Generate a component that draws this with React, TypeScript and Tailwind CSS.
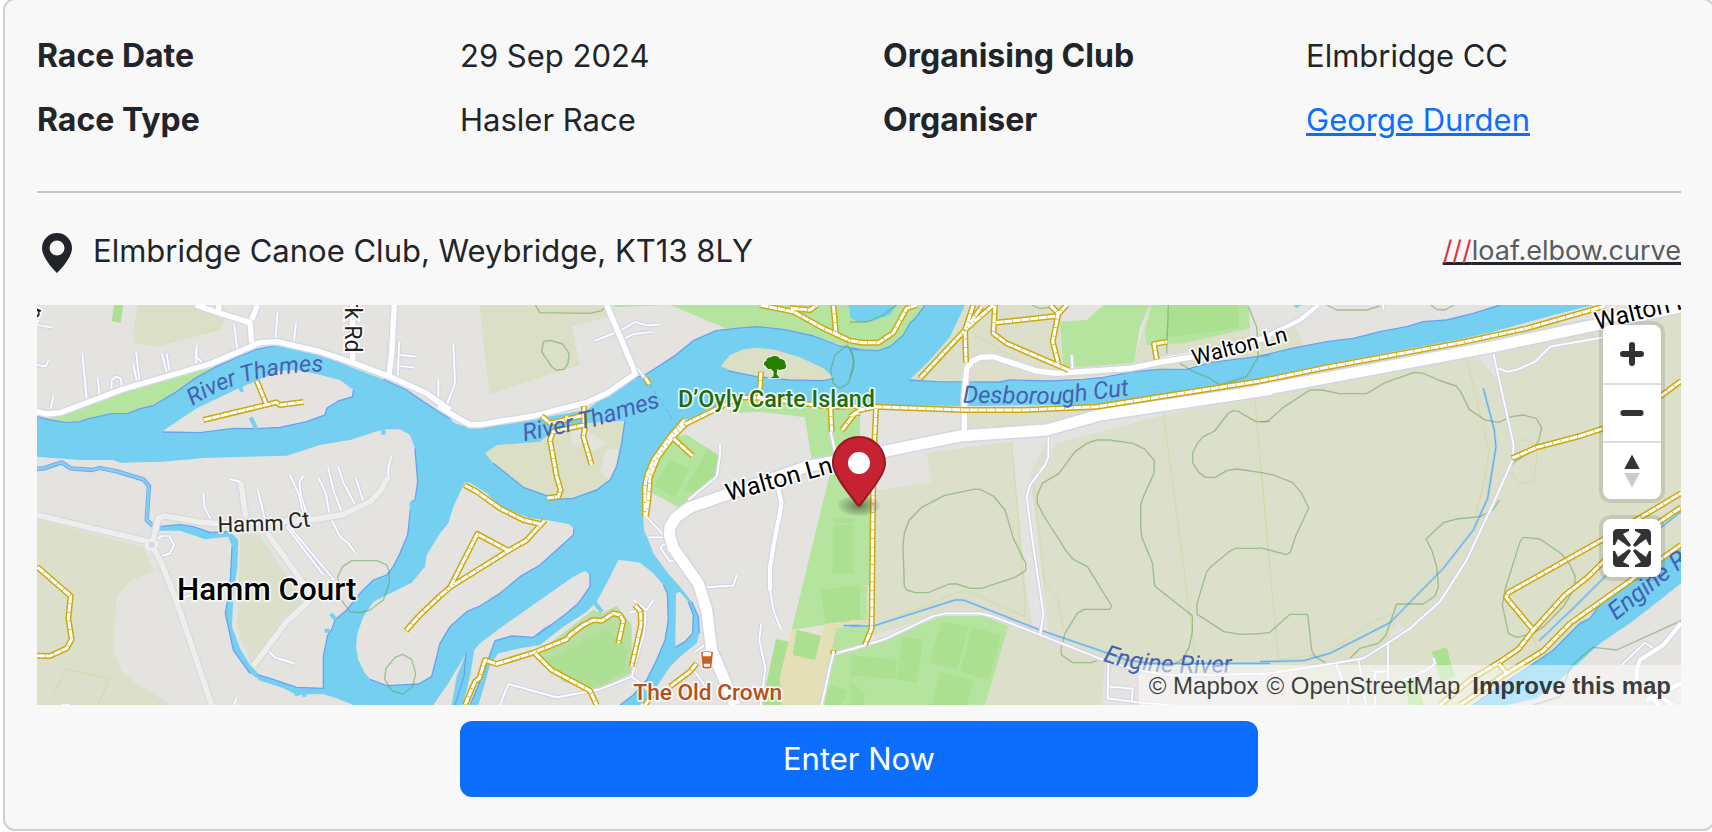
import React from "react";

type Shape = [number, string];

// The map is drawn in four sheets laid side by side.
const SHEET = [0, 1230, 2460, 3690];

function Layer({ shapes, className, width, dash }: { shapes: Shape[]; className: string; width?: number; dash?: string }) {
  return (
    <g className={className} strokeWidth={width} strokeDasharray={dash} strokeLinejoin="round">
      {shapes.map(([s, d], i) => (
        <path key={i} d={d} transform={`translate(${SHEET[s]} 0)`} />
      ))}
    </g>
  );
}

const farmland: Shape[] = [
  [0, "M21 657L340 742L372 812L300 842L260 888L250 1050L278 1122L420 1215H21Z"],
  [0, "M632 700L690 705L825 910L772 960L665 1098L620 980Z"],
  [2, "M80 572L242 547L230 458L480 425L600 435L940 345L1260 280V1215H405L470 975L390 945L270 945L70 1005Z"],
  [2, "M345 247L178 240L345 15H640L630 120L640 205L850 190L900 15H960L1150 15L1230 60L1240 170L900 213L560 245Z"],
  [2, "M345 322L740 322L1260 238V262L830 335L590 378L345 388Z"],
  [3, "M0 292L560 175L1010 80L1263 45V1215H0Z"],
  [3, "M0 100L105 75L130 138L0 162Z"],
  [3, "M730 95L1263 15V60L1000 90L0 250V238Z"],
];

const meadow: Shape[] = [
  [0, "M323 15L310 90L312 128L378 140L572 90L583 60L497 15Z"],
  [1, "M118 15L148 282L420 195L395 80L508 50L500 15Z"],
];

const urban: Shape[] = [
  [2, "M20 335L340 345V400L80 445V330Z"],
  [2, "M485 420L590 425L540 520L595 990H550L530 880Z"],
  [2, "M590 410L625 405L600 480Z"],
  [2, "M765 1090L900 1130L1260 1120V1215H755Z"],
  [3, "M0 1120L110 1105L105 1215H0Z"],
  [3, "M655 168L700 160L710 240Z"],
  [3, "M385 1010L415 970L440 990Z"],
  [3, "M745 1215L830 1190L930 1105L1030 1025L1263 848V1215Z"],
  [2, "M1195 15H1260V110L1200 110Z"],
  [3, "M0 15H720L500 60L130 135L105 70L0 110Z"],
];

const park: Shape[] = [
  [0, "M21 350L90 345L300 265L540 195L580 195L560 215L370 320L300 342L180 358L110 370Z"],
  [1, "M525 15H960L1260 15V150L1120 112L950 83L860 86L690 15L520 22Z"],
  [2, "M0 15H240L200 60L170 120L90 155L0 150Z"],
  [2, "M630 65L710 60L760 15H900L870 80L852 188L640 205Z"],
  [2, "M940 15H1195L1200 85L1000 130L890 135L885 90L905 15Z"],
  [1, "M700 410L740 405L835 465L828 535L745 600L720 625L630 575L640 510Z"],
  [1, "M865 340L900 300L1260 320V400L1250 1215H1130L1182 970L1055 990L1180 480L1115 480L1095 352L960 335Z"],
  [2, "M0 340L25 335L20 430L75 450L68 970L40 1035H0Z"],
  [2, "M0 1050L130 1010L270 948L400 948L475 978L405 1215H0Z"],
];

const islandPark: Shape[] = [
  [1, "M290 1060L460 930L485 940L530 918L575 975V1120L470 1170L370 1145L320 1090Z"],
];

const islandPitch: Shape[] = [
  [1, "M320 1080L500 985L560 1040L555 1110L470 1165L380 1145Z"],
];

const pitch: Shape[] = [
  [0, "M252 15H280L272 68L246 64Z"],
  [2, "M960 15H1165L1167 85L945 112Z"],
  [1, "M690 478L748 508L705 592L642 558Z"],
  [1, "M805 445L835 470L828 530L760 580L732 570Z"],
  [1, "M1178 678L1242 672V820H1178Z"],
  [1, "M1143 870L1260 855V960L1155 970Z"],
  [1, "M1180 655H1240V668H1180Z"],
  [1, "M1008 1018L1050 1025L1020 1130L1030 1215H965Z"],
  [1, "M1170 1155L1222 1170L1205 1215H1150Z"],
  [2, "M155 1010L218 1018L202 1150L140 1138Z"],
  [2, "M275 965L357 980L322 1108L237 1090Z"],
  [2, "M365 980L453 1005L417 1140L330 1115Z"],
  [2, "M270 1115L372 1142L350 1215H245Z"],
  [2, "M5 1065L142 1080L135 1138L0 1125Z"],
  [2, "M0 1145L45 1180L38 1215H0Z"],
  [3, "M515 1055L560 1042L572 1085L530 1095Z"],
  [3, "M525 1095L572 1085L585 1130L545 1145Z"],
  [3, "M430 1145L470 1130L490 1215H448Z"],
];

const sand: Shape[] = [
  [1, "M1055 985L1145 1005L1155 972L1260 960V978L1190 985L1165 1090L1140 1215H1025L1020 1130Z"],
  [2, "M35 858L50 855V960H0V978H65V855Z"],
];

const courts: Shape[] = [[1, "M1070 990L1143 1008L1125 1080L1058 1065Z"]];

const water: Shape[] = [
  [0, "M21 350L60 360L110 368L150 365L180 355L245 341L295 340L330 326L368 318L440 275L500 232L560 200L620 172L680 148L740 136L870 163L960 200L1050 235L1130 270L1180 305L1265 358V1215H970L920 1195L880 1183L840 1183L800 1185L760 1165L685 1140L690 1126L720 1135L800 1162L880 1165V1070L893 1005L905 990L915 960L950 930L990 880L1030 840L1070 825L1090 800L1110 760L1133 705L1143 635L1145 605L1155 600L1163 545L1155 445L1140 405L1110 388L1060 388L960 420L870 435L770 467L650 470L520 474L400 485L270 488L250 480L150 480L21 470Z"],
  [1, "M-5 340L50 372L90 383L250 362L440 330L480 300L530 266L590 232L620 222L700 170L760 122L828 92L880 86L950 80L1030 88L1120 108L1200 138L1265 148V318L1100 308L950 300L905 290L865 310L805 328L750 358L735 358L690 400L660 440L630 490L610 555L608 620L612 690L625 720L640 760L680 815L720 860L755 905L775 950L778 1000L770 1030L720 1070L690 1100L650 1160L600 1215H-5Z"],
  [2, "M0 148L85 152L120 140L160 105L180 70L200 50L225 15H345L300 110L240 180L178 240L260 245L345 247L450 246L480 240L600 243L700 238L760 232L850 215L930 208L1010 208L1080 188L1180 175L1265 165V236L1100 260L900 290L740 314L400 318L0 315Z"],
  [3, "M0 168L95 145L200 125L280 115L360 95L440 80L490 65L560 60L640 40L720 15H1000L870 48L700 95L600 118L400 155L200 195L0 236Z"],
  [3, "M1263 750L1200 780L1150 825L1080 860L1030 900L990 955L960 970L880 1050L800 1105L740 1145L640 1215H745L830 1195L900 1140L950 1095L1020 1030L1110 970L1200 900L1263 850Z"],
  [0, "M385 680L450 674L490 680L540 697L600 695L625 720L622 800L610 890L606 980L630 1045L660 1095L690 1126L690 1140L660 1120L610 1050L586 940L600 860L606 740L595 710L525 718L450 692L385 692Z"],
  [1, "M1225 15H1260V60L1235 55Z"],
  [2, "M0 15H140L120 45L60 65L20 66L0 50Z"],
  [3, "M100 15H125L108 25Z"],
];

const islands: Shape[] = [
  [0, "M395 395L500 325L620 268L750 212L800 210L860 222L930 240L970 270L968 290L925 303L890 325L885 345L830 365L750 382L680 386L610 385L510 398Z"],
  [1, "M75 545L40 620L25 670L0 700L-40 765L-45 800L-85 848L-140 875L-200 905L-230 950L-248 1000L-252 1040L-245 1080L-225 1120L-210 1138L-160 1157L-65 1152L-25 1130L-15 1090L0 1030L30 980L80 935L120 918L180 880L240 830L300 795L350 750L400 705L402 685L385 672L320 660L270 655L180 620L140 580L90 548Z"],
  [1, "M103 1050L120 1030L200 970L300 900L400 830L435 812L450 825V860L415 910L380 940L340 970L310 985L280 1012L215 1008L165 1022L155 1050L130 1120L90 1215H68L90 1130Z"],
  [1, "M78 1060L50 1130L35 1215H-20L25 1150Z"],
  [1, "M115 1215L135 1150L150 1095L175 1060L240 1045L300 1035L370 980L440 935L470 905L500 850L535 780L560 782L600 788L640 820L670 855L682 880L685 960L675 1020L650 1080L620 1140L580 1185L540 1215Z"],
  [1, "M708 880L720 875L745 905L760 945L758 1000L735 1025L706 1042Z"],
];

const meadowIslands: Shape[] = [
  [1, "M135 460L170 435L300 425L330 400L390 385L430 370L555 362L545 430L530 500L510 540L470 570L400 595L350 598L300 580L250 562L210 530L160 490Z"],
  [1, "M843 198L870 165L910 148L950 143L1000 148L1080 172L1150 205L1183 235L1150 242L1050 240L950 230L880 215Z"],
];

const greyPatches: Shape[] = [
  [1, "M390 395L430 385L450 400L500 430L460 455L435 430L400 440Z"],
  [1, "M498 448L535 448L525 505L510 540L480 515Z"],
];

const banks: Shape[] = [
  [0, "M21 350L60 360L110 368L150 365L180 355L245 341L295 340L330 326L368 318L440 275L500 232L560 200L620 172L680 148L740 136"],
  [0, "M1060 238L1130 270L1180 305L1260 357"],
  [0, "M395 396L510 398L610 385L680 386L750 382L830 365L885 345L890 325L925 303L968 290L970 270"],
  [0, "M1155 445L1163 545L1155 600L1145 605L1140 640L1133 705L1110 760L1090 800L1070 825L1030 840L990 880L950 930L915 960L905 990L893 1005L880 1070V1165L800 1162L720 1135L685 1125"],
  [0, "M606 740L600 860L586 940L610 1050L660 1120M385 680L450 674L490 680L540 697L600 695"],
  [1, "M480 300L530 266L590 232L620 222L700 170L760 122L828 92L880 86L950 80L1030 88L1120 108L1200 138L1260 148"],
  [1, "M-210 1138L-160 1157L-65 1152L-25 1130L-15 1090L0 1030L30 980L80 935L120 918L180 880L240 830L300 795L350 750L400 705L402 685"],
  [1, "M450 822V860L415 910L380 940L340 970L280 1012L215 1008L165 1022L155 1050L130 1120L90 1215M78 1060L72 1130L45 1215"],
  [1, "M670 855L682 880L685 960L675 1020L650 1080L620 1140L580 1185L540 1215M745 905L760 945L758 1000L735 1025L706 1042M755 905L775 950L778 1000"],
  [1, "M555 362L545 430L530 500L510 540L470 570L400 595L350 598L300 580L250 562L160 490"],
  [1, "M865 213L950 230L1050 240L1150 242L1183 235"],
  [2, "M0 148L85 152L120 140L160 105L180 70L200 50L225 15M178 240L260 245L450 246L480 240L600 243L700 238L760 232L850 215L930 208L1010 208L1080 188L1180 175L1260 165"],
  [3, "M0 168L95 145L200 125L280 115L360 95L440 80L490 65L560 60L640 40L720 15"],
  [3, "M1263 750L1200 780L1150 825L1080 860L1030 900L990 955L960 970L880 1050L800 1105L740 1145L640 1215"],
];

const inlets: Shape[] = [
  [0, "M632 262L636 276M662 352L680 388M1060 388V404M902 942L918 958M884 992H900M1145 605V632"],
  [1, "M462 905L486 936"],
  [0, "M800 1180V1188M823 1180V1190"],
];

const streams: Shape[] = [
  [0, "M21 507L42 505L95 487L122 505L185 510L210 504L260 514L340 538L357 558L350 660L368 678"],
];

const brooks: Shape[] = [
  [2, "M0 978H70L315 900L340 900L570 990L760 1055L830 1080L900 1090H1260"],
  [1, "M1210 977H1260"],
  [3, "M0 1085L130 1082L210 1060L390 968L550 805L640 690L683 595L708 440L703 390L670 265"],
  [3, "M838 1022L960 905L1040 825M1200 685L1263 635"],
];

const contours: Shape[] = [
  [0, "M965 782H1042L1070 795L1078 815V850L1060 900L1020 930L990 938L960 935L930 895L923 830L938 800Z"],
  [0, "M1118 1063L1145 1078L1157 1120L1148 1160L1118 1182L1085 1172L1064 1138L1068 1105L1095 1072Z"],
  [1, "M286 15L300 38L450 40L485 32L500 15"],
  [1, "M310 125L330 121L368 132L387 160L384 190L372 208L348 210L335 200L318 175L305 155Z"],
  [1, "M1222 135L1238 160L1242 200L1225 250L1200 265L1180 250L1172 210L1185 165Z"],
  [2, "M0 66L50 66L100 45L140 15M0 148L12 180L0 235M545 15L570 26L600 22M955 15L950 160M1195 20L1220 80L1225 170L1190 230L1110 255L1080 235L1030 215L990 190"],
  [2, "M370 568H390L430 588L465 630L490 715L527 790V812L495 832L395 865H360L320 852H297L235 878L195 878L170 870L163 858L159 735L163 700L178 660L215 622L282 587Z"],
  [2, "M785 918L712 800L670 778L650 755L580 645L562 610V585L577 550L627 520L675 455L710 430L740 420H778L850 430L885 448L913 482L912 520L880 590L872 615V680L875 710L907 788L914 858L1027 947V995L1018 1040L1000 1075L970 1095M785 918L779 928H702L682 940L645 1000L633 1045L635 1065L668 1088H725L740 1082"],
  [2, "M1260 365H1217L1165 334L1148 332L1133 342L1094 393L1060 410L1042 430L1028 460V488L1046 517L1067 532H1096L1130 512L1160 507L1230 517"],
  [2, "M1230 745H1157L1140 753L1085 798L1070 815L1040 915L1042 943L1122 995L1170 1003L1230 1001"],
  [3, "M0 365H15L28 360L70 322L150 270H187L237 281H320L375 248L463 217L490 220L535 240L588 258L602 275L628 328L675 360L715 367L755 350L790 345L830 356L845 385L835 425L805 460L765 485L740 515"],
  [3, "M0 517L40 525L98 548L125 580L146 625L107 708L92 755L80 764L0 743M0 1001L28 998L90 943H143L155 1050L165 1070L200 1090M270 1075L300 1045L355 1030L378 1005L410 912H490L525 888L535 860L530 800L515 750L498 717L550 668L590 657L660 650L700 630L717 600"],
  [3, "M790 712L840 717L905 762L930 795L946 830L943 865L910 920L850 980L820 1000L770 1012L745 1000L727 915L735 870L780 725Z"],
  [3, "M200 15L230 30H320L360 18M512 15L530 28L555 30L582 15M1000 1042L1070 1050L1263 962M820 1215L900 1190L930 1100L1000 1040"],
];

const fieldLines: Shape[] = [
  [0, "M110 1108L238 1136L205 1215M72 1180L110 1108"],
  [2, "M485 425L525 900V950L345 870L80 975M550 550L585 850L622 890L640 985M940 340L1035 1060M1215 300L1260 800M370 60V100L520 190"],
  [3, "M0 480L55 1080L200 1060L350 960L395 945M620 175L688 455L665 580L640 660M765 420L800 420L830 440V480L820 545L780 550L750 515M810 990L835 1050"],
];

const laneRoads: Shape[] = [
  [0, "M157 160L170 295M203 232L208 285M245 270V240L258 230L272 235L276 262M318 155L328 240M310 195L320 240M395 160L410 215M410 160L418 210M500 135V172L520 190M498 150V190M612 70L622 150M743 35L736 118M798 70L792 122M21 75L66 82M21 195L48 199L55 182M70 290L62 325M1078 122L1072 215M1108 125L1103 228M1108 165L1160 170M1108 198L1153 203M1225 240V290M1260 290L1248 315"],
  [0, "M520 580L523 620L543 660M600 538L632 545L647 650M683 568L705 660L715 700M780 525L805 580L820 640M820 528L808 545L812 585L830 640M866 535L888 580L900 650L930 710L955 730L975 758M894 502L910 570L935 635M924 498L940 548L978 620M978 535L1000 605M1085 468L1075 500V530M770 680L880 825M770 670L912 840M375 720L395 708L418 708L432 735L420 760L395 768M712 1050L735 1072L792 1090M620 1193L612 1215M440 900L485 885M95 1215L120 1215"],
  [1, "M40 132L45 250L20 318M465 122L540 92L585 66L620 76L658 74M555 115L580 102L636 96M585 195L615 235M840 432V470L830 530L745 600M615 645L670 705M625 712H670M690 740L672 732L660 742L690 785L705 780M795 862L880 857L890 825M963 972L958 1020L976 1105L962 1215M990 870L1000 930L1023 988M1172 395L1190 480M580 900L620 930L640 900M570 938L600 930L617 940L612 1000L575 1130L480 1168L350 1192L205 1152L180 1215M575 1130L640 1180M765 1055L795 1035M765 1115L800 1165M1145 1215L1170 1100L1180 1062L1260 1040"],
  [2, "M0 1050L110 1015L250 948L290 940H390L430 950L520 985L760 1080L860 1110L950 1125H1100L1260 1120M595 405V470L585 495L540 555L530 590L550 740L580 940L570 1005M665 165L668 210M775 1090L773 1195L870 1208L960 1215M778 1160L848 1166L845 1203M1020 160L930 175"],
  [3, "M0 1125L220 1090L310 1075L390 1025L450 985L540 905L620 780L700 610L760 475V430L700 160M715 205L740 215L770 210L825 185L870 140L1030 112M228 1090L265 1190V1215M295 1075L318 1215M384 1030V1165M345 1215V1115H384M430 1140L500 1110L525 1090L520 1075M370 15V28M1085 1095L1155 1028L1180 1045"],
];

const streets: Shape[] = [
  [1, "M1010 545L1025 610L1000 740L990 800V870"],
  [3, "M1263 970L1210 1035L1140 1080L1130 1110V1150L1160 1180L1200 1215M1160 1200L1263 1150M1180 1180L1240 1215M0 118L120 60L175 15"],
];

const softRoads: Shape[] = [
  [0, "M21 645L355 725M365 735L395 790L440 905L545 1215M365 735L385 655L405 648L500 665L570 672L840 660L935 645L1020 605L1050 575L1075 530M712 700L835 870V905L770 965L670 1098M632 545L647 650"],
];

const avenues: Shape[] = [
  [0, "M21 335L50 342L90 338L280 267L540 192L690 128L740 125L870 155L960 185L1080 230L1190 280L1260 330"],
  [0, "M497 15L565 38L660 68L665 128M567 15L565 38M1093 15L1085 160L1077 225M968 185V15M682 15L665 60"],
  [1, "M-5 318L55 355L90 374L120 374L280 348L440 308L500 280L585 222L580 205L500 15"],
  [2, "M343 400V290L350 205L365 185L390 172L430 170L560 213L620 220L840 205L940 185L1060 165L1260 110"],
];

const mainRoads: Shape[] = [
  [1, "M885 1215L815 1050L800 930L775 850L700 745L688 705L690 680L710 650L750 622L870 580L1100 500L1260 470"],
  [2, "M0 475L330 408L590 390L750 345L1265 268"],
  [3, "M-5 272L700 140L1100 55L1263 20"],
];

const paths: Shape[] = [
  [0, "M520 360L715 313L738 307L750 315L820 306M680 242L708 310M21 800L122 888L115 955L125 1018L110 1045L60 1068L21 1067"],
  [0, "M1128 992L1165 950L1230 888"],
  [1, "M0 888L30 862L205 752L258 722L315 660M30 862L112 702L205 752M73 555L110 575L180 625L250 660L300 672"],
  [1, "M305 348L330 370L435 345M432 318V375L340 395L330 420L350 530L362 570L355 590L322 594M380 347V360M435 380L430 410L455 495M615 232L628 252"],
  [1, "M735 358L690 410L640 480L620 530L615 560V650M735 375L700 410L655 470L630 530L625 600L618 650M710 385L900 292L950 293L1170 320L1260 318M963 215L958 290M700 415L758 468M1172 322L1175 395M1205 392L1245 340L1260 338"],
  [1, "M75 1215L105 1145L118 1135L135 1080L170 1092L280 1058L380 1018L390 1005L430 975L460 960L485 962L520 940L540 945L550 962L535 1030M285 1060L335 1110L450 1172L470 1215M585 915L602 935L603 975L575 1100M770 1090L750 1115L690 1160M640 1180L615 1215M1180 1050V1062"],
  [1, "M960 15L1060 35L1150 85L1230 122M1050 25L1110 30L1130 15M1180 15L1188 100"],
  [2, "M0 122L40 128H85L130 98L170 25L200 15M210 235L350 85L430 15M345 90L348 188M370 15L345 90L395 20M435 15L430 100L470 130L655 210M435 68L620 48L650 15M600 15L625 40L608 125L625 190M920 178L912 132L952 125"],
  [2, "M0 350L30 330L75 320L345 330L520 330L740 320L1230 243M78 325L70 500L65 985L45 1035"],
  [3, "M0 243L200 202L600 128L800 85L1035 18M755 475L830 442L960 408L1030 385M1200 290L1263 243"],
  [3, "M1120 665L1263 580M1035 715L745 878L738 892L820 990M1195 668L1263 622M1035 780L985 830L915 885L820 990L775 1048L715 1088L630 1140L540 1215M600 1215L740 1120L850 1052L930 970L1263 735M715 1090L740 1120"],
];

const curves: Record<string, string> = {
  thamesWest: "M488 318Q660 205 935 215",
  thamesMid: "M1483 424L1700 378L1960 300",
  cut: "M2798 308L3080 312L3350 280",
  waltonWest: "M2095 604L2560 476",
  waltonNorth: "M3492 196L3880 96",
  waltonEast: "M4700 90L5020 12",
  engineWest: "M3218 1082Q3350 1135 3680 1112",
  engineEast: "M4758 962L5020 752",
  hammCt: "M563 697L740 692L910 670",
};

function CurvedLabel({ on, className, children }: { on: string; className: string; children: string }) {
  return (
    <text className={className} strokeWidth={10} strokeLinejoin="round" paintOrder="stroke">
      <textPath href={`#${on}`}>{children}</textPath>
    </text>
  );
}

function PlaceLabel({ x, y, className, children }: { x: number; y: number; className: string; children: string }) {
  return (
    <text x={x} y={y} className={className} strokeWidth={10} strokeLinejoin="round" paintOrder="stroke">
      {children}
    </text>
  );
}

function RaceMap() {
  return (
    <svg
      viewBox="21 15 4932 1200"
      preserveAspectRatio="xMidYMid slice"
      className="block h-full w-full bg-[#e4e3df] font-[Roboto,sans-serif]"
      role="img"
      aria-label="Map of the race venue"
    >
      <defs>
        {Object.entries(curves).map(([id, d]) => (
          <path key={id} id={id} d={d} />
        ))}
      </defs>
      <Layer shapes={farmland} className="fill-[#dcdfca]" />
      <Layer shapes={meadow} className="fill-[#dadfc5]" />
      <Layer shapes={urban} className="fill-[#e4e3df]" />
      <Layer shapes={park} className="fill-[#b5e49e]" />
      <Layer shapes={pitch} className="fill-[#aae08f]" />
      <Layer shapes={sand} className="fill-[#e5dfb8]" />
      <Layer shapes={courts} className="fill-[#aae08f]" />
      <Layer shapes={fieldLines} className="fill-none stroke-[#d0dba8]" width={3} />
      <Layer shapes={water} className="fill-[#75cff0]" />
      <Layer shapes={islands} className="fill-[#e4e3df]" />
      <Layer shapes={meadowIslands} className="fill-[#dadfc5]" />
      <Layer shapes={greyPatches} className="fill-[#e4e3df]" />
      <Layer shapes={islandPark} className="fill-[#b7dfa2]" />
      <Layer shapes={islandPitch} className="fill-[#ade095]" />
      <Layer shapes={banks} className="fill-none stroke-[#69a3f0]" width={4} />
      <Layer shapes={inlets} className="fill-none stroke-[#75cff0]" width={12} />
      <Layer shapes={streams} className="fill-none stroke-[#6aa4ee]" width={13} />
      <Layer shapes={streams} className="fill-none stroke-[#86cdf4]" width={8} />
      <Layer shapes={brooks} className="fill-none stroke-[#a9d3e6]" width={8} />
      <Layer shapes={brooks} className="fill-none stroke-[#62a8ee]" width={3} />
      <Layer shapes={contours} className="fill-none stroke-[#5d9b4d]/50" width={4} />
      <Layer shapes={laneRoads} className="fill-none stroke-[#d6d7e6]" width={13} />
      <Layer shapes={laneRoads} className="fill-none stroke-white" width={5} />
      <Layer shapes={softRoads} className="fill-none stroke-[#d9d9e4]" width={24} />
      <Layer shapes={streets} className="fill-none stroke-[#d6d7e6]" width={20} />
      <Layer shapes={avenues} className="fill-none stroke-[#d6d7e6]" width={24} />
      <Layer shapes={mainRoads} className="fill-none stroke-[#d2d6e6]" width={42} />
      <Layer shapes={softRoads} className="fill-none stroke-[#efeeeb]" width={16} />
      <Layer shapes={streets} className="fill-none stroke-white" width={12} />
      <Layer shapes={avenues} className="fill-none stroke-white" width={16} />
      <Layer shapes={mainRoads} className="fill-none stroke-white" width={33} />
      <circle cx={365} cy={734} r={14} className="fill-[#d6d7e6] stroke-[#f1f0ee]" strokeWidth={9} />
      <path d="M1858 252L1930 362" className="fill-none stroke-[#6aa2ee]" strokeWidth={2} strokeDasharray="14 8" />
      <Layer shapes={paths} className="fill-none stroke-[#cba90c]" width={18} />
      <Layer shapes={paths} className="fill-none stroke-white" width={9} />
      <Layer shapes={paths} className="fill-none stroke-[#cba90c]" width={9} dash="2 24" />

      <g transform="translate(2202 168)" className="fill-[#258000] stroke-white/70" strokeWidth={6} paintOrder="stroke">
        <path d="M32 0C42 0 46 5 48 9C58 8 66 16 64 23C70 31 64 41 55 40C49 43 44 42 40 39L38 54L47 66H19L28 61L29 47L20 38C12 41 7 36 6 31C-3 27-1 16 7 14C6 6 15 2 21 4C24 1 28 0 32 0Z" />
      </g>
      <g transform="translate(2013 1053)" className="fill-[#c95f22] stroke-white" strokeWidth={6} paintOrder="stroke">
        <path d="M0 4Q18-3 36 4L31 50Q18 55 5 50Z" />
        <path d="M5 5Q18 0 31 5L30 16H6ZM8 38H28L27 47H9Z" className="fill-white stroke-none" />
      </g>

      <CurvedLabel on="thamesWest" className="fill-[#4660b0] text-[70px] italic">River Thames</CurvedLabel>
      <CurvedLabel on="thamesMid" className="fill-[#4660b0] text-[72px] italic">River Thames</CurvedLabel>
      <CurvedLabel on="cut" className="fill-[#4660b0] text-[72px] italic">Desborough Cut</CurvedLabel>
      <CurvedLabel on="engineWest" className="fill-[#4660b0] text-[74px] italic">Engine River</CurvedLabel>
      <CurvedLabel on="engineEast" className="fill-[#4660b0] text-[74px] italic">Engine River</CurvedLabel>
      <CurvedLabel on="waltonWest" className="fill-black stroke-white text-[74px]">Walton Ln</CurvedLabel>
      <CurvedLabel on="waltonNorth" className="fill-black stroke-white text-[66px]">Walton Ln</CurvedLabel>
      <CurvedLabel on="waltonEast" className="fill-black stroke-white text-[74px]">Walton Ln</CurvedLabel>
      <CurvedLabel on="hammCt" className="fill-[#222] stroke-[#f4f3f1] text-[66px]">Hamm Ct</CurvedLabel>
      <text transform="translate(944 158) rotate(90)" textAnchor="end" className="fill-[#222] stroke-white text-[70px]" strokeWidth={10} paintOrder="stroke">
        Park Rd
      </text>
      <text transform="translate(2 102) rotate(-66)" className="fill-[#222] stroke-white text-[70px]" strokeWidth={10} paintOrder="stroke">
        Rd
      </text>
      <PlaceLabel x={441} y={900} className="fill-black stroke-white/80 text-[94px] font-medium">Hamm Court</PlaceLabel>
      <PlaceLabel x={1944} y={321} className="fill-[#246b07] stroke-white/80 text-[70px] font-medium">D’Oyly Carte Island</PlaceLabel>
      <PlaceLabel x={1810} y={1201} className="fill-[#b5501a] stroke-white/80 text-[68px] font-medium">The Old Crown</PlaceLabel>
    </svg>
  );
}

function VenueMarker() {
  return (
    <svg viewBox="0 0 27 41" className="pointer-events-none absolute left-1/2 top-[131px] h-[82px] w-[54px] -translate-x-1/2" aria-hidden="true">
      <defs>
        <radialGradient id="markerShadow">
          <stop offset="10%" stopOpacity="0.4" />
          <stop offset="100%" stopOpacity="0.05" />
        </radialGradient>
      </defs>
      <ellipse cx="13.5" cy="34.8" rx="10.5" ry="5.25" fill="url(#markerShadow)" />
      <path
        d="M27 13.5C27 19.07 20.25 27 14.75 34.5C14.02 35.5 12.98 35.5 12.25 34.5C6.75 27 0 19.22 0 13.5C0 6.04 6.04 0 13.5 0C20.96 0 27 6.04 27 13.5Z"
        className="fill-[#c72232]"
      />
      <path
        d="M13.5 0C6.04 0 0 6.04 0 13.5C0 19.22 6.75 27 12.25 34.5C13 35.52 14.02 35.5 14.75 34.5C20.25 27 27 19.07 27 13.5C27 6.04 20.96 0 13.5 0ZM13.5 1C20.42 1 26 6.58 26 13.5C26 15.9 24.5 19.18 22.22 22.74C19.95 26.3 16.71 30.14 13.94 33.91C13.74 34.18 13.66 34.26 13.5 34.44C13.34 34.26 13.26 34.18 13.06 33.91C10.28 30.13 7.41 26.31 5.02 22.77C2.62 19.23 1 15.95 1 13.5C1 6.58 6.58 1 13.5 1Z"
        className="fill-black/25"
      />
      <circle cx="13.5" cy="13.5" r="5.5" className="fill-white" />
    </svg>
  );
}

const controlButton = "flex h-[58px] w-[58px] items-center justify-center";

function MapControls() {
  return (
    <div className="absolute right-5 top-5 flex flex-col gap-5">
      <div className="overflow-hidden rounded-lg bg-white shadow-[0_0_0_4px_rgba(0,0,0,0.1)]">
        <button type="button" aria-label="Zoom in" className={controlButton}>
          <svg viewBox="0 0 58 58" className="h-full w-full fill-none stroke-[#333]" strokeWidth="6" strokeLinecap="round">
            <path d="M20 29H38M29 20V38" />
          </svg>
        </button>
        <button type="button" aria-label="Zoom out" className={`${controlButton} border-t-2 border-[#ddd]`}>
          <svg viewBox="0 0 58 58" className="h-full w-full fill-none stroke-[#333]" strokeWidth="6" strokeLinecap="round">
            <path d="M20 29H38" />
          </svg>
        </button>
        <button type="button" aria-label="Reset bearing to north" className={`${controlButton} border-t-2 border-[#ddd]`}>
          <svg viewBox="0 0 58 58" className="h-full w-full">
            <path d="M21 27L29 12L37 27Z" className="fill-[#333]" />
            <path d="M21 31L29 46L37 31Z" className="fill-[#ccc]" />
          </svg>
        </button>
      </div>
      <div className="overflow-hidden rounded-lg bg-white shadow-[0_0_0_4px_rgba(0,0,0,0.1)]">
        <button type="button" aria-label="Enter fullscreen" className={controlButton}>
          <svg viewBox="0 0 29 29" className="h-full w-full fill-[#333]">
            <path d="M24 16v5.5c0 1.75-.75 2.5-2.5 2.5H16v-1l3-1.5-4-5.5 1-1 5.5 4 1.5-3h1zM6 16l1.5 3 5.5-4 1 1-4 5.5 3 1.5v1H7.5C5.75 24 5 23.25 5 21.5V16h1zm7-11v1l-3 1.5 4 5.5-1 1-5.5-4L6 13H5V7.5C5 5.75 5.75 5 7.5 5H13zm11 2.5c0-1.75-.75-2.5-2.5-2.5H16v1l3 1.5-4 5.5 1 1 5.5-4 1.5 3h1V7.5z" />
          </svg>
        </button>
      </div>
    </div>
  );
}

const term = "text-[32px] font-bold";

export default function App() {
  return (
    <div className="overflow-hidden bg-white font-[Inter,sans-serif] text-[31px] leading-[48px] text-[#212529]">
      <main className="-mr-[3px] -mt-0.5 ml-[3px] rounded-xl border-2 border-[#cfcfcf] bg-[#f8f8f8] p-8">
        <dl className="grid grid-cols-4 gap-x-12 gap-y-4">
          <dt className={term}>Race Date</dt>
          <dd>29 Sep 2024</dd>
          <dt className={term}>Organising Club</dt>
          <dd>Elmbridge CC</dd>
          <dt className={term}>Race Type</dt>
          <dd>Hasler Race</dd>
          <dt className={term}>Organiser</dt>
          <dd>
            <a href="#organiser" className="text-[#0d6efd] underline decoration-[3px]">George Durden</a>
          </dd>
        </dl>
        <hr className="mb-8 mt-[47px] border-t-2 border-[#c4c4c4]" />
        <div className="mb-[30px] flex items-center justify-between pt-0.5">
          <p className="flex items-center gap-4">
            <svg viewBox="0 0 16 16" className="mt-1 h-10 w-10 fill-[#212529]" aria-hidden="true">
              <path d="M8 16s6-5.686 6-10A6 6 0 0 0 2 6c0 4.314 6 10 6 10m0-7a3 3 0 1 1 0-6 3 3 0 0 1 0 6" />
            </svg>
            Elmbridge Canoe Club, Weybridge, KT13 8LY
          </p>
          <a href="#location" className="text-[27px] underline decoration-[#212529] decoration-[3px] [text-decoration-skip-ink:none]">
            <span className="text-[#dc3545]">///</span>
            <span className="text-[#595c5f]">loaf.elbow.curve</span>
          </a>
        </div>
        <section aria-label="Venue map" className="relative h-[400px] overflow-hidden">
          <RaceMap />
          <VenueMarker />
          <MapControls />
          <div className="absolute bottom-0 right-0 flex h-10 items-center whitespace-nowrap bg-white/50 pl-2.5 pr-2.5 pt-0.5 font-['Liberation_Sans',sans-serif] text-[24px] text-black/75">
            <a href="#mapbox" className="mr-2">© Mapbox</a>
            <a href="#osm" className="mr-3">© OpenStreetMap</a>
            <a href="#improve" className="font-bold">Improve this map</a>
          </div>
        </section>
        <div className="mt-4 grid grid-cols-4 gap-x-12">
          <button type="button" className="col-span-2 col-start-2 h-[76px] rounded-xl bg-[#0d6efd] text-white">
            Enter Now
          </button>
        </div>
      </main>
    </div>
  );
}
